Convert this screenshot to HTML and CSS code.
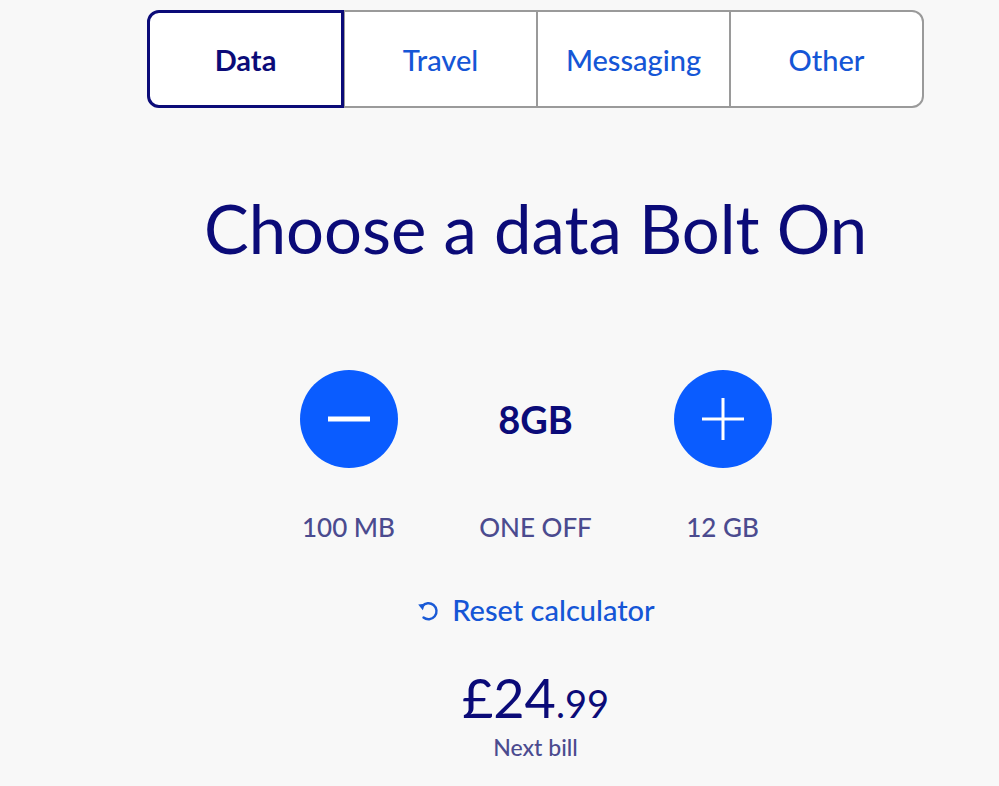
FILE: index.html
```html
<!DOCTYPE html>
<html>
    <head>
        <title>Bolt Ons</title>
        <meta charset=utf8>
        <link rel="stylesheet" href="styles.css">
    </head>
    <body>
        <div id="page">
            <div class="tabs">
                <div class="tab selected">Data</div>
                <div class="tab">Travel</div>
                <div class="tab">Messaging</div>
                <div class="tab">Other</div>
            </div>

            <h1 class="title">Choose a data Bolt On</h1>

            <div class="stepper">
                <div class="step-col">
                    <button class="round">
                        <svg width="42" height="8" viewBox="0 0 42 8"><rect x="0" y="1.5" width="42" height="5" fill="#fff"/></svg>
                    </button>
                    <div class="limit">100 MB</div>
                </div>
                <div class="step-col">
                    <div class="amount">8GB</div>
                    <div class="limit">ONE OFF</div>
                </div>
                <div class="step-col">
                    <button class="round">
                        <svg width="44" height="44" viewBox="0 0 44 44"><path d="M22 1v42M1 22h42" stroke="#fff" stroke-width="3" fill="none"/></svg>
                    </button>
                    <div class="limit">12 GB</div>
                </div>
            </div>

            <div class="reset">
                <svg width="24" height="24" viewBox="0 0 24 24"><path d="M6.3 8.2A8 8 0 1 1 7.5 19.5" stroke="#1a5ad6" stroke-width="2.4" fill="none" stroke-linecap="round"/><path d="M2.2 6.4l6.8 -0.6 -2.2 6.4z" fill="#1a5ad6"/></svg>
                <span>Reset calculator</span>
            </div>

            <div class="price">£24<span class="pence">.99</span></div>
            <div class="price-label">Next bill</div>
        </div>
    </body>
</html>
```

FILE: styles.css
```css
html {
    font-family: Lato, "Noto Sans", sans-serif;
}
body {
    margin: 0;
    padding: 0;
    background-color: #f8f8f8;
}
#page {
    width: 777px;
    margin-left: 147px;
    padding-top: 10px;
    display: flex;
    flex-direction: column;
    align-items: center;
}
.tabs {
    display: flex;
    width: 100%;
}
.tab {
    flex: 1;
    height: 94px;
    display: flex;
    align-items: center;
    justify-content: center;
    background-color: white;
    border: 2px solid #9a9a9a;
    border-left-width: 1px;
    border-right-width: 1px;
    color: #1556d6;
    font-size: 29px;
    font-weight: 500;
}
.tab:first-child {
    border-radius: 12px 0 0 12px;
}
.tab:last-child {
    border-right-width: 2px;
    border-radius: 0 12px 12px 0;
}
.tab.selected {
    border: 3px solid #0b0b78;
    height: 92px;
    color: #0b0b78;
    font-weight: bold;
}
.title {
    margin: 70px 0 0 0;
    font-size: 67px;
    font-weight: normal;
    color: #0b0b78;
    line-height: 100px;
}
.stepper {
    display: flex;
    gap: 89px;
    margin-top: 92px;
}
.step-col {
    width: 98px;
    display: flex;
    flex-direction: column;
    align-items: center;
}
.round {
    width: 98px;
    height: 98px;
    border-radius: 50%;
    border: none;
    padding: 0;
    background-color: #0a5cff;
    display: flex;
    align-items: center;
    justify-content: center;
}
.amount {
    height: 98px;
    display: flex;
    align-items: center;
    font-size: 38px;
    font-weight: bold;
    color: #0b0b78;
}
.limit {
    margin-top: 44px;
    white-space: nowrap;
    font-size: 26px;
    font-weight: 500;
    color: #4b4b8f;
    line-height: 30px;
}
.reset {
    margin-top: 50px;
    display: flex;
    align-items: center;
    gap: 12px;
    color: #1556d6;
    font-size: 29px;
    font-weight: 500;
}
.price {
    margin-top: 41px;
    font-size: 54px;
    color: #0b0b78;
    line-height: 60px;
}
.pence {
    font-size: 38px;
}
.price-label {
    font-size: 23px;
    font-weight: 500;
    color: #4b4b8f;
    line-height: 28px;
}
```
